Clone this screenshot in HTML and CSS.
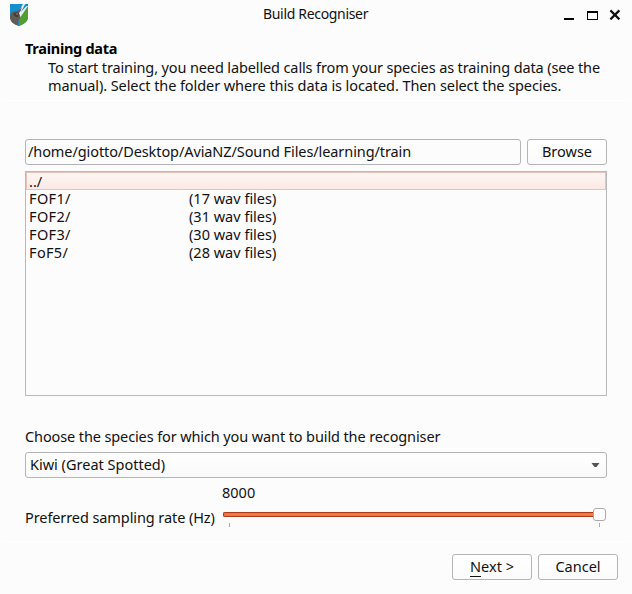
FILE: index.html
```html
<!DOCTYPE html>
<html lang="en">
<head>
<meta charset="utf-8">
<title>Build Recogniser</title>
<link rel="stylesheet" href="styles.css">
</head>
<body>
<div class="window">
  <header class="titlebar">
    <svg class="logo" width="18" height="22" viewBox="0 0 18 22">
      <path fill="#168fd0" d="M0 0h18v13q0 6-9 9-9-3-9-9z"/>
      <path fill="#549c34" d="M18 2v11q0 6-9 9l1-11z"/>
      <path fill="#e4f0f2" d="M13 0h2.2L11 8l5.500-6H18L10.500 13 8 9z"/>
      <path fill="#625b54" d="M0 12q1-5 6-5 3 0 6-4-1 4-3 6 2 4 0 7-2 3 0 6-8-2-9-8z"/>
      <path fill="#433e3b" d="M3 10q3-3 6-1l-1 4q-3 1-5-3z"/>
      <circle cx="7" cy="10" r=".7" fill="#b4a99b"/>
    </svg>
    <h1 class="title"><span class="t-title">Build Recogniser</span></h1>
    <svg class="controls" width="58" height="14" viewBox="0 0 58 14">
      <path fill="#000" d="M0 12h10v2H0z"/>
      <path fill="#000" fill-rule="evenodd" d="M23 5h11v9H23zM24 7v6h9V7z"/>
      <path stroke="#111" stroke-width="2.2" d="M46.400 4.400l9 9m0-9l-9 9"/>
    </svg>
  </header>
  <section class="intro">
    <h2 class="heading"><span class="t-heading">Training data</span></h2>
    <p class="sub"><span class="t-line1">To start training, you need labelled calls from your species as training data (see the</span><br><span class="t-line2">manual). Select the folder where this data is located. Then select the species.</span></p>
  </section>
  <main class="content">
    <div class="folder">
      <div class="path"><span class="t-path">/home/giotto/Desktop/AviaNZ/Sound Files/learning/train</span></div>
      <button class="button">Browse</button>
    </div>
    <ul class="list">
      <li class="row selected"><span>../</span></li>
      <li class="row"><span class="t-dir">FOF1/</span><span>(17 wav files)</span></li>
      <li class="row"><span class="t-dir">FOF2/</span><span>(31 wav files)</span></li>
      <li class="row"><span class="t-dir">FOF3/</span><span>(30 wav files)</span></li>
      <li class="row"><span class="t-dir">FoF5/</span><span>(28 wav files)</span></li>
    </ul>
    <p class="label"><span class="t-choose">Choose the species for which you want to build the recogniser</span></p>
    <div class="select">
      <span class="choice">Kiwi (Great Spotted)</span>
      <svg width="9" height="5" viewBox="0 0 9 5"><path fill="#555" d="M.5 0h8L5.500 4h-2z"/></svg>
    </div>
    <div class="rate">
      <span class="value">8000</span>
      <span class="rate-label">Preferred sampling rate (Hz)</span>
      <div class="slider">
        <div class="track"><i class="groove"></i><i class="thumb"></i></div>
        <div class="ticks"><i></i><i></i></div>
      </div>
    </div>
  </main>
  <footer class="actions">
    <button class="button"><span class="key">N</span>ext &gt;</button>
    <button class="button">Cancel</button>
  </footer>
</div>
</body>
</html>
```
FILE: styles.css
```css
* { box-sizing: border-box; }
body { margin: 0; background: #fcfcfc; }
.window {
  width: 632px; height: 594px; overflow: hidden;
  display: flex; flex-direction: column;
  background: #fcfcfc; color: #111;
  font: 14.5px/18px "Noto Sans", "Open Sans", sans-serif;
  white-space: nowrap;
}
h1, h2, p, ul { margin: 0; padding: 0; font: inherit; }
.titlebar { height: 30px; display: flex; padding: 4px 10px 0 10px; }
.logo { flex: none; }
.title { flex: 1; padding: 1px 0 0 235px; font-size: 14px; }
.t-title { letter-spacing: -.32px; }
.controls { margin-top: 2px; }
.intro { height: 71px; margin: 0 4px; padding: 9px 0 0 21px; border-bottom: 1px solid #fff; }
.heading { font-weight: 700; color: #000; }
.t-heading { letter-spacing: -.28px; }
.sub { padding: 1px 0 0 23px; }
.t-line1 { letter-spacing: -.125px; }
.t-line2 { letter-spacing: -.085px; }
.content { height: 440px; padding: 38px 25px 0; }
.folder { display: flex; gap: 6px; height: 26px; }
.path {
  flex: 1; padding: 2px 2px;
  border: 1px solid #b5b5b5; border-radius: 3px;
}
.t-path { letter-spacing: -.09px; }
.button {
  width: 80px; height: 26px; padding: 0 0 2px;
  border: 1px solid #b5b5b5; border-radius: 3px;
  background: linear-gradient(#fff, #fbfbfb);
  color: #111; font: inherit; line-height: 22px; text-align: center;
}
.list { height: 225px; margin-top: 6px; border: 1px solid #b9b9b9; list-style: none; }
.row { height: 18px; display: grid; grid-template-columns: 160px 1fr; padding-left: 3px; line-height: 16px; }
.t-dir { letter-spacing: .35px; }
.selected {
  padding-left: 2px;
  border: 1px solid #e9c2b8; background: linear-gradient(#fef6f4, #fbe9e5);
}
.label { padding-top: 31px; height: 56px; }
.t-choose { letter-spacing: -.115px; }
.select {
  height: 26px; padding: 0 6px 0 4px;
  display: flex; align-items: center; justify-content: space-between;
  border: 1px solid #b5b5b5; border-radius: 3px;
  background: linear-gradient(#fff, #f9f9f9);
}
.choice { padding-bottom: 2px; }
.rate { display: grid; grid-template-columns: 197px 1fr; grid-template-rows: 25px 24px; padding-top: 5px; }
.value { grid-column: 2; }
.rate-label { letter-spacing: -.09px; }
.track { height: 13px; display: flex; align-items: center; padding-right: 1px; }
.groove { flex: 1; height: 5px; margin-left: 1px; border: 1px solid #a63c17; border-right: 0; border-radius: 2px 0 0 2px; background: #f47444; }
.thumb { width: 13px; height: 13px; border: 1px solid #aaa; border-radius: 3px; background: #fff; }
.ticks { height: 6px; display: flex; justify-content: space-between; padding: 2px 7px 0; }
.ticks i { width: 1px; height: 4px; background: #aaa; }
.actions { margin: 0 4px; height: 53px; border-top: 1px solid #fff; padding: 12px 10px 0; display: flex; justify-content: flex-end; gap: 6px; }
.key { border-bottom: 1px solid #111; }
```
